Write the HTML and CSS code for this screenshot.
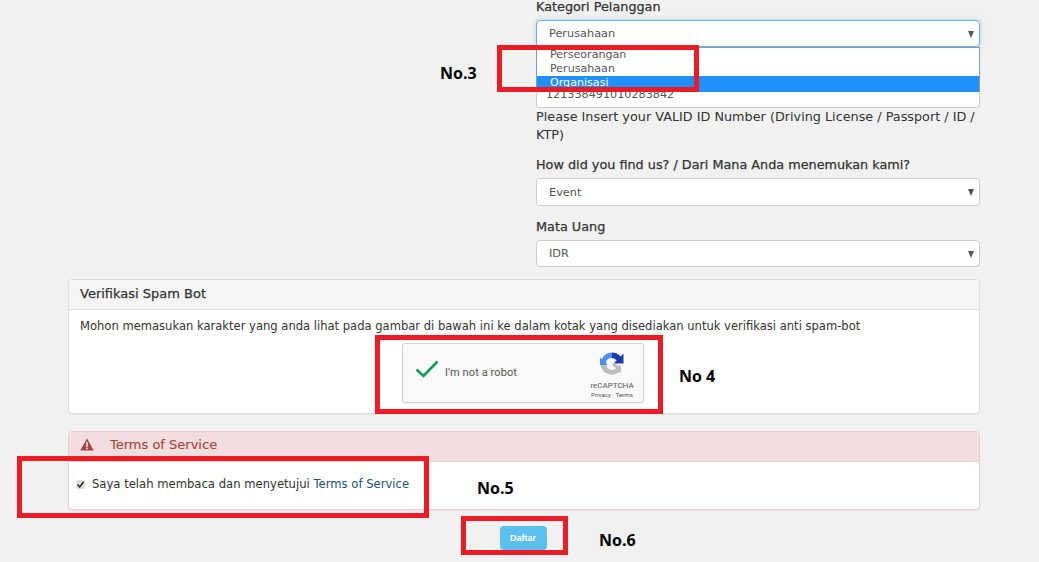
FILE: index.html
```html
<!DOCTYPE html>
<html lang="id">
<head>
<meta charset="utf-8">
<title>Pendaftaran</title>
<link rel="stylesheet" href="styles.css">
</head>
<body>
<main class="page">
  <section class="form-col">
    <div class="label label-first">Kategori Pelanggan</div>
    <div class="select select-focus"><span>Perusahaan</span><i class="caret"></i>
      <ul class="dropdown">
        <li>Perseorangan</li>
        <li>Perusahaan</li>
        <li class="active">Organisasi</li>
      </ul>
    </div>
    <div class="id-input">121338491010283842</div>
    <p class="help">Please Insert your VALID ID Number (Driving License / Passport / ID / KTP)</p>
    <div class="label label-find">How did you find us? / Dari Mana Anda menemukan kami?</div>
    <div class="select"><span>Event</span><i class="caret"></i></div>
    <div class="label label-cur">Mata Uang</div>
    <div class="select select-cur"><span>IDR</span><i class="caret"></i></div>
  </section>

  <section class="panel panel-bot">
    <header class="panel-head">Verifikasi Spam Bot</header>
    <div class="panel-body">
      <p class="bot-text">Mohon memasukan karakter yang anda lihat pada gambar di bawah ini ke dalam kotak yang disediakan untuk verifikasi anti spam-bot</p>
      <div class="captcha">
        <svg class="check" viewBox="0 0 24 18" width="24" height="18"><path d="M1.5 9.5 L8.5 16 L22.5 1.5" fill="none" stroke="#0f9d58" stroke-width="2.6"/></svg>
        <span class="captcha-label">I'm not a robot</span>
        <div class="captcha-brand">
          <svg class="recap" viewBox="0 0 24 24" width="24" height="24">
            <path d="M12 0.5 A11.5 11.5 0 0 0 1.6 7.2 L0 5.5 V13 H7.5 L5.8 10.6 A6 6 0 0 1 12 6 Z" fill="#4a90f5"/>
            <path d="M12 0.5 A11.5 11.5 0 0 1 20.6 4.4 L23.5 1.5 V11.5 H13.5 L16.6 8.4 A6 6 0 0 0 12 6 Z" fill="#1c3aa9"/>
            <path d="M0.5 13 H6.2 A6 6 0 0 0 16 16.5 L13.5 13.5 H21 V21 L19.5 19.8 A11.5 11.5 0 0 1 0.5 13 Z" fill="#bdbdbd"/>
            <circle cx="14.5" cy="13" r="2" fill="#bdbdbd"/>
          </svg>
          <span class="recap-name">reCAPTCHA</span>
          <span class="recap-links">Privacy · Terms</span>
        </div>
      </div>
    </div>
  </section>

  <section class="panel panel-tos">
    <header class="panel-head tos-head">
      <svg class="warn" viewBox="0 0 14 13" width="14" height="13"><path d="M7 0.5 L13.8 12.5 H0.2 Z" fill="#a94442"/><rect x="6.2" y="4" width="1.6" height="4.8" fill="#f2dede"/><rect x="6.2" y="9.6" width="1.6" height="1.6" fill="#f2dede"/></svg>
      <span>Terms of Service</span>
    </header>
    <div class="tos-body">
      <span class="tick"><svg viewBox="0 0 9 9" width="9" height="9"><path d="M1.5 4.5 L3.7 7 L7.6 1.8" fill="none" stroke="#333" stroke-width="1.6"/></svg></span>
      <span>Saya telah membaca dan menyetujui <a href="#tos">Terms of Service</a></span>
    </div>
  </section>

  <div class="actions"><button class="btn" type="button">Daftar</button></div>
</main>

<div class="mark mark-3"></div>
<div class="mark mark-4"></div>
<div class="mark mark-5"></div>
<div class="mark mark-6"></div>
<b class="note note-3">No.3</b>
<b class="note note-4">No 4</b>
<b class="note note-5">No.5</b>
<b class="note note-6">No.6</b>
</body>
</html>
```
FILE: styles.css
```css
* { box-sizing: border-box; }
html, body { margin: 0; padding: 0; height: 562px; overflow: hidden; }
body {
  position: relative;
  background: #f1f1f1;
  color: #333;
  font-family: "DejaVu Sans", Verdana, sans-serif;
  font-size: 12px;
}
.page { padding: 0 59px 0 68px; }

.form-col { margin-left: 468px; width: 444px; }
.label { font-size: 12.8px; line-height: 18px; color: #333; -webkit-text-stroke: 0.25px #333; }
.label-first { margin-top: -2px; height: 22px; }
.label-find { margin-top: 12px; height: 22px; }
.label-cur { margin-top: 12px; height: 22px; }

.select {
  position: relative;
  height: 28px;
  padding: 0 12px;
  display: flex;
  align-items: center;
  background: #fff;
  border: 1px solid #ccc;
  border-radius: 4px;
  font-size: 11.3px;
  color: #555;
}
.select-focus { height: 27px; border-color: #66afe9; box-shadow: 0 0 4px rgba(102,175,233,.5); }
.select-cur { height: 27px; }
.caret {
  position: absolute; right: 5px; top: 10px;
  width: 0; height: 0;
  border-left: 3.5px solid transparent;
  border-right: 3.5px solid transparent;
  border-top: 7px solid #555;
}
.dropdown {
  position: absolute; left: -1px; right: -1px; top: 26px;
  margin: 0; padding: 0; list-style: none;
  background: #fff;
  border: 1px solid #7f9db9;
  border-bottom: 0;
  font-size: 11.1px;
  line-height: 14px;
  z-index: 2;
}
.dropdown li { padding: 0 13px; height: 14px; color: #555; }
.dropdown .active { background: #1e90ff; color: #fff; height: 16px; }

.id-input {
  height: 61px;
  padding: 40px 9px 0;
  background: #fff;
  border: 1px solid #ccc;
  border-top: 0;
  border-radius: 0 0 4px 4px;
  font-size: 11.2px;
  line-height: 15px;
  color: #555;
}
.help { margin: 0; font-size: 12.8px; line-height: 18px; color: #333; }

.panel {
  background: #fff;
  border: 1px solid #ddd;
  border-radius: 4px;
  box-shadow: 0 1px 1px rgba(0,0,0,.05);
}
.panel-bot { margin-top: 12px; height: 135px; }
.panel-head {
  height: 30px;
  padding: 0 11px 2px;
  display: flex;
  align-items: center;
  background: #f5f5f5;
  border-bottom: 1px solid #ddd;
  border-radius: 3px 3px 0 0;
  font-size: 13px;
  color: #333;
  -webkit-text-stroke: 0.25px #333;
}
.panel-body { padding: 8px 11px 0; }
.bot-text { margin: 0; font-size: 11.56px; line-height: 17px; color: #333; }
.captcha {
  display: flex;
  align-items: center;
  width: 242px; height: 60px;
  margin: 8px 0 0 322px;
  padding-left: 12px;
  background: #f9f9f9;
  border: 1px solid #d3d3d3;
  border-radius: 3px;
  box-shadow: 0 0 3px rgba(0,0,0,.08);
}
.check { flex: none; margin-right: 6px; margin-top: -8px; }
.captcha-label { font-family: Roboto, sans-serif; font-size: 11px; color: #555; margin-top: -2px; letter-spacing: .1px; }
.captcha-brand {
  margin-left: auto;
  width: 60px;
  display: flex; flex-direction: column; align-items: center;
  font-family: Roboto, sans-serif;
  color: #555;
  transform: translateX(-1px);
}
.recap { margin-top: 4px; }
.recap-name { font-size: 8px; line-height: 10px; margin-top: 5px; }
.recap-links { font-size: 6.2px; line-height: 8px; margin-top: 0; }

.panel-tos { margin-top: 17px; height: 79px; border-color: #ebccd1; }
.tos-head { background: #f2dede; border-bottom-color: #ebccd1; color: #a94442; gap: 16px; padding-bottom: 4px; -webkit-text-stroke: 0.15px #a94442; }
.tos-body { display: flex; align-items: center; height: 48px; padding: 0 0 4px 7px; font-size: 11.62px; color: #333; gap: 7px; }
.tos-body a { color: #23527c; text-decoration: none; }
.tick {
  display: flex; align-items: center; justify-content: center;
  width: 9px; height: 9px;
  background: #ddd;
  border-radius: 2px;
}

.actions { display: flex; justify-content: center; margin-top: 16px; padding-right: 2px; }
.btn {
  width: 47px; height: 24px;
  padding: 0;
  background: #5bc0ef;
  border: 0;
  border-radius: 4px;
  color: #fff;
  font-family: "Liberation Sans", Arial, sans-serif;
  font-size: 9px;
  font-weight: 700;
}

.mark { position: absolute; border: 5px solid #ed1c24; z-index: 3; }
.mark-3 { left: 497px; top: 45px; width: 202px; height: 47px; }
.mark-4 { left: 375px; top: 335px; width: 288px; height: 79px; }
.mark-5 { left: 17px; top: 456px; width: 412px; height: 62px; }
.mark-6 { left: 461px; top: 516px; width: 107px; height: 39px; }
.note {
  position: absolute; z-index: 3;
  font-family: "Open Sans", "Liberation Sans", sans-serif;
  font-size: 16px; line-height: 20px; font-weight: 700; color: #000;
}
.note-3 { left: 440px; top: 63px; }
.note-4 { left: 679px; top: 366px; }
.note-5 { left: 477px; top: 478px; }
.note-6 { left: 599px; top: 530px; }
```
